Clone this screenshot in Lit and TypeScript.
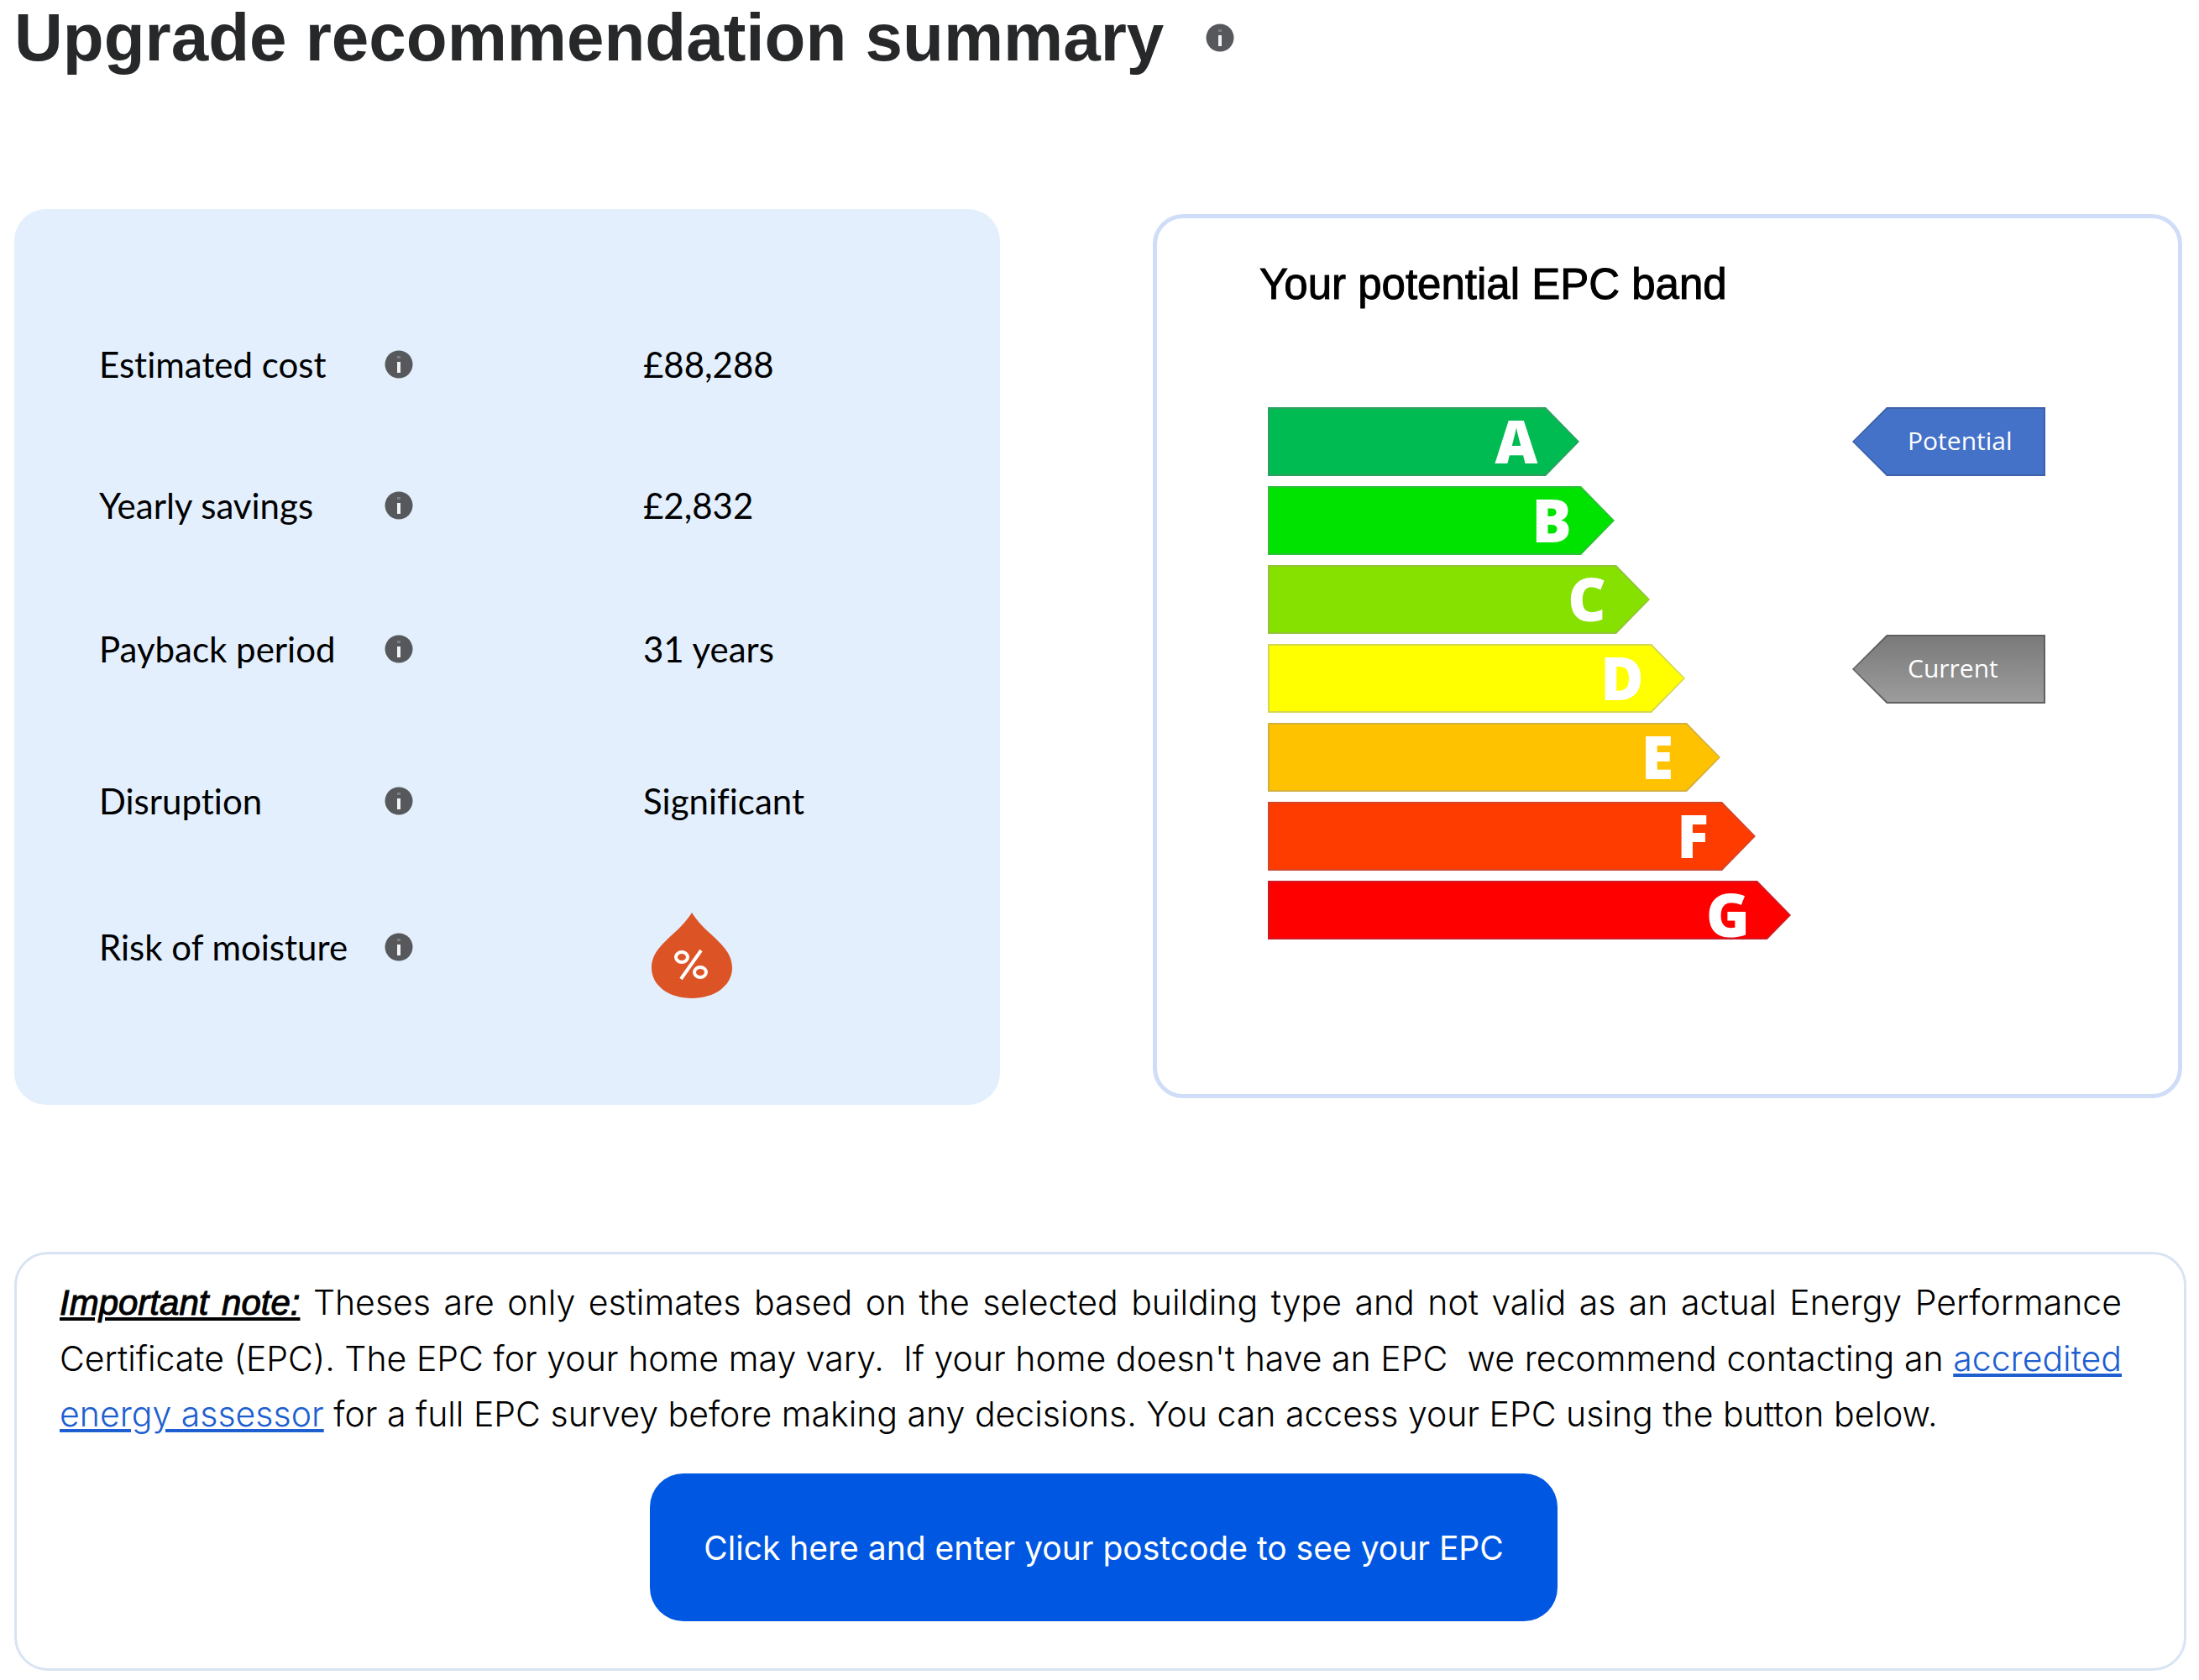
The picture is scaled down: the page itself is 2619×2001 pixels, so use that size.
import { LitElement, html, css } from "lit";
import { customElement, property } from "lit/decorators.js";

@customElement("info-button")
class InfoButton extends LitElement {
  @property() topic = "";

  static styles = css`
    :host {
      display: block;
      width: 34px;
      height: 34px;
    }
    .info {
      display: block;
      width: 34px;
      height: 34px;
      padding: 0;
      border: 0;
      background: none;
      cursor: pointer;
    }
    .glyph {
      display: block;
      width: 34px;
      height: 34px;
    }
  `;

  render() {
    return html`<button class="info" type="button" aria-label="About ${this.topic}">
      <svg class="glyph" viewBox="0 0 34 34" aria-hidden="true">
        <circle cx="17" cy="17" r="16.5" fill="#56585c" />
        <rect x="15" y="7" width="4" height="3" fill="#7c7e82" />
        <rect x="15" y="14" width="4" height="13" fill="#f1f3f5" />
      </svg>
    </button>`;
  }
}

interface Band {
  letter: string;
  fill: string;
  edge: string;
}

const BANDS: Band[] = [
  { letter: "A", fill: "#00bb52", edge: "#2f9f60" },
  { letter: "B", fill: "#00e200", edge: "#2fbf38" },
  { letter: "C", fill: "#86e000", edge: "#93c43c" },
  { letter: "D", fill: "#ffff00", edge: "#d6d652" },
  { letter: "E", fill: "#ffc200", edge: "#d5b03c" },
  { letter: "F", fill: "#ff3c00", edge: "#d2452a" },
  { letter: "G", fill: "#ff0000", edge: "#cc1a24" },
];

@customElement("epc-chart")
class EpcChart extends LitElement {
  static styles = css`
    :host {
      display: flex;
      justify-content: space-between;
      font-family: "Open Sans", "Noto Sans", sans-serif;
      color: #fff;
    }
    .bands {
      display: flex;
      flex-direction: column;
      gap: 12px;
      margin: 0;
      padding: 0;
      list-style: none;
    }
    .band {
      display: grid;
      justify-items: end;
      height: 82px;
      box-sizing: border-box;
      padding-right: 45px;
      clip-path: polygon(0 0, calc(100% - 40px) 0, 100% 41px, calc(100% - 40px) 82px, 0 82px);
    }
    .band:last-child {
      height: 70px;
    }
    .fill {
      grid-area: 1 / 1;
      justify-self: stretch;
      margin: 2px -43px 2px 2px;
      clip-path: polygon(0 0, calc(100% - 39px) 0, 100% 39px, calc(100% - 39px) 78px, 0 78px);
    }
    .letter {
      grid-area: 1 / 1;
      width: 60px;
      height: 0;
      text-align: center;
      font-size: 70px;
      font-weight: 800;
      line-height: 80px;
      z-index: 1;
    }
    .tags {
      display: flex;
      flex-direction: column;
      gap: 189px;
    }
    .tag {
      display: grid;
      width: 230px;
      height: 82px;
      font-size: 30px;
      clip-path: polygon(100% 0, 41px 0, 0 50%, 41px 100%, 100% 100%);
    }
    .tag.potential {
      background: #3c61a8;
    }
    .tag.current {
      background: #606060;
    }
    .face {
      margin: 2px;
      padding-left: 64px;
      line-height: 76px;
      clip-path: polygon(100% 0, 40px 0, 0 50%, 40px 100%, 100% 100%);
    }
    .potential .face {
      background: #4472c8;
    }
    .current .face {
      background: linear-gradient(#7a7a7a, #9c9c9c);
    }
  `;

  render() {
    return html`
      <ol class="bands">
        ${BANDS.map(
          (b, i) => html`<li class="band" style="width:${371 + i * 42}px;background:${b.edge}">
            <span class="fill" style="background:${b.fill}"></span>
            <span class="letter">${b.letter}</span>
          </li>`
        )}
      </ol>
      <div class="tags">
        <div class="tag potential"><span class="face">Potential</span></div>
        <div class="tag current"><span class="face">Current</span></div>
      </div>
    `;
  }
}

@customElement("app-root")
class AppRoot extends LitElement {
  static styles = css`
    :host {
      display: block;
      background: #fff;
      color: #000;
      font-family: "Liberation Sans", Arial, sans-serif;
    }
    .page {
      padding: 0 15px 11px 17px;
    }
    .head {
      display: flex;
      align-items: center;
      gap: 50px;
      height: 89px;
    }
    .title {
      margin: 0;
      font-size: 80px;
      font-weight: 700;
      line-height: 92px;
      color: #26282a;
    }
    .cards {
      display: grid;
      grid-template-columns: 1174fr 1226fr;
      column-gap: 182px;
      margin: 160px 5px 175px 0;
    }
    .summary {
      display: grid;
      grid-template-rows: 168px 171px 181px 174px auto;
      margin: 0;
      padding: 155px 101px 218px;
      border-radius: 38px;
      background: #e3effd;
      font-family: Lato, "Open Sans", sans-serif;
      font-size: 42px;
      font-variant-ligatures: no-common-ligatures;
      line-height: 60px;
    }
    .row {
      display: grid;
      grid-template-columns: 340px 308px 1fr;
      align-items: start;
    }
    .row:last-child {
      height: 0;
    }
    .label,
    .value {
      margin: 0;
    }
    .hint {
      margin: 13px 0 0;
    }
    .drop {
      display: block;
      width: 98px;
      height: 104px;
      margin: -12px 0 0 9px;
    }
    .epc {
      margin: 6px 0 8px;
      padding: 50px 158px 0 132px;
      border: 5px solid #d0ddf9;
      border-radius: 36px;
    }
    .epc-title {
      margin: 0 0 117px -10px;
      font-size: 51px;
      font-weight: 400;
      line-height: 58px;
      -webkit-text-stroke: 1px #000;
    }
    .note {
      padding: 24px 74px 56px 51px;
      border: 3px solid #d8e4f3;
      border-radius: 40px;
    }
    .text {
      margin: 0 0 38px;
      font-family: Inter, "Liberation Sans", sans-serif;
      font-size: 41px;
      font-weight: 300;
      line-height: 66px;
      text-align: justify;
    }
    .lead {
      font-family: "Liberation Sans", Arial, sans-serif;
      font-size: 42px;
      font-style: italic;
      font-weight: 400;
      text-decoration: underline;
      -webkit-text-stroke: 1px #000;
    }
    .link {
      color: #1d5fd0;
      text-decoration: underline;
    }
    .action {
      display: flex;
      justify-content: center;
      margin-right: -31px;
    }
    .cta {
      height: 176px;
      padding: 0 64px;
      border: 0;
      border-radius: 40px;
      background: #0057e1;
      color: #fff;
      font-family: Inter, "Liberation Sans", sans-serif;
      font-size: 39px;
      font-weight: 400;
      cursor: pointer;
    }
  `;

  private rows = [
    ["Estimated cost", "£88,288"],
    ["Yearly savings", "£2,832"],
    ["Payback period", "31 years"],
    ["Disruption", "Significant"],
  ];

  private row(label: string, value: unknown) {
    return html`<div class="row">
      <dt class="label">${label}</dt>
      <dd class="hint"><info-button topic=${label}></info-button></dd>
      <dd class="value">${value}</dd>
    </div>`;
  }

  render() {
    return html`
      <main class="page">
        <header class="head">
          <h1 class="title">Upgrade recommendation summary</h1>
          <info-button topic="Upgrade recommendation summary"></info-button>
        </header>
        <div class="cards">
          <dl class="summary">
            ${this.rows.map(([l, v]) => this.row(l, v))}
            ${this.row(
              "Risk of moisture",
              html`<svg class="drop" viewBox="0 0 98 104" role="img" aria-label="High moisture risk">
                <path
                  d="M49 1C44 9 37 17 27 26C12 40 1 50 1 67C1 88 22 103 49 103C76 103 97 88 97 67C97 50 86 40 71 26C61 17 54 9 49 1Z"
                  fill="#dc5425"
                />
                <g fill="none" stroke="#fff" stroke-width="4">
                  <ellipse cx="37" cy="54" rx="7" ry="6" />
                  <ellipse cx="59" cy="72" rx="7" ry="6" />
                  <path d="M60 46L36 80" />
                </g>
              </svg>`
            )}
          </dl>
          <section class="epc">
            <h2 class="epc-title">Your potential EPC band</h2>
            <epc-chart></epc-chart>
          </section>
        </div>
        <section class="note">
          <p class="text">
            <em class="lead">Important note:</em> Theses are only estimates based on the selected building type and not
            valid as an actual Energy Performance Certificate (EPC). The EPC for your home may vary.&nbsp; If your home
            doesn't have an EPC&nbsp; we recommend contacting an
            <a class="link" href="#assessor">accredited energy assessor</a> for a full EPC survey before making any
            decisions. You can access your EPC using the button below.
          </p>
          <div class="action">
            <button class="cta" type="button">Click here and enter your postcode to see your EPC</button>
          </div>
        </section>
      </main>
    `;
  }
}
